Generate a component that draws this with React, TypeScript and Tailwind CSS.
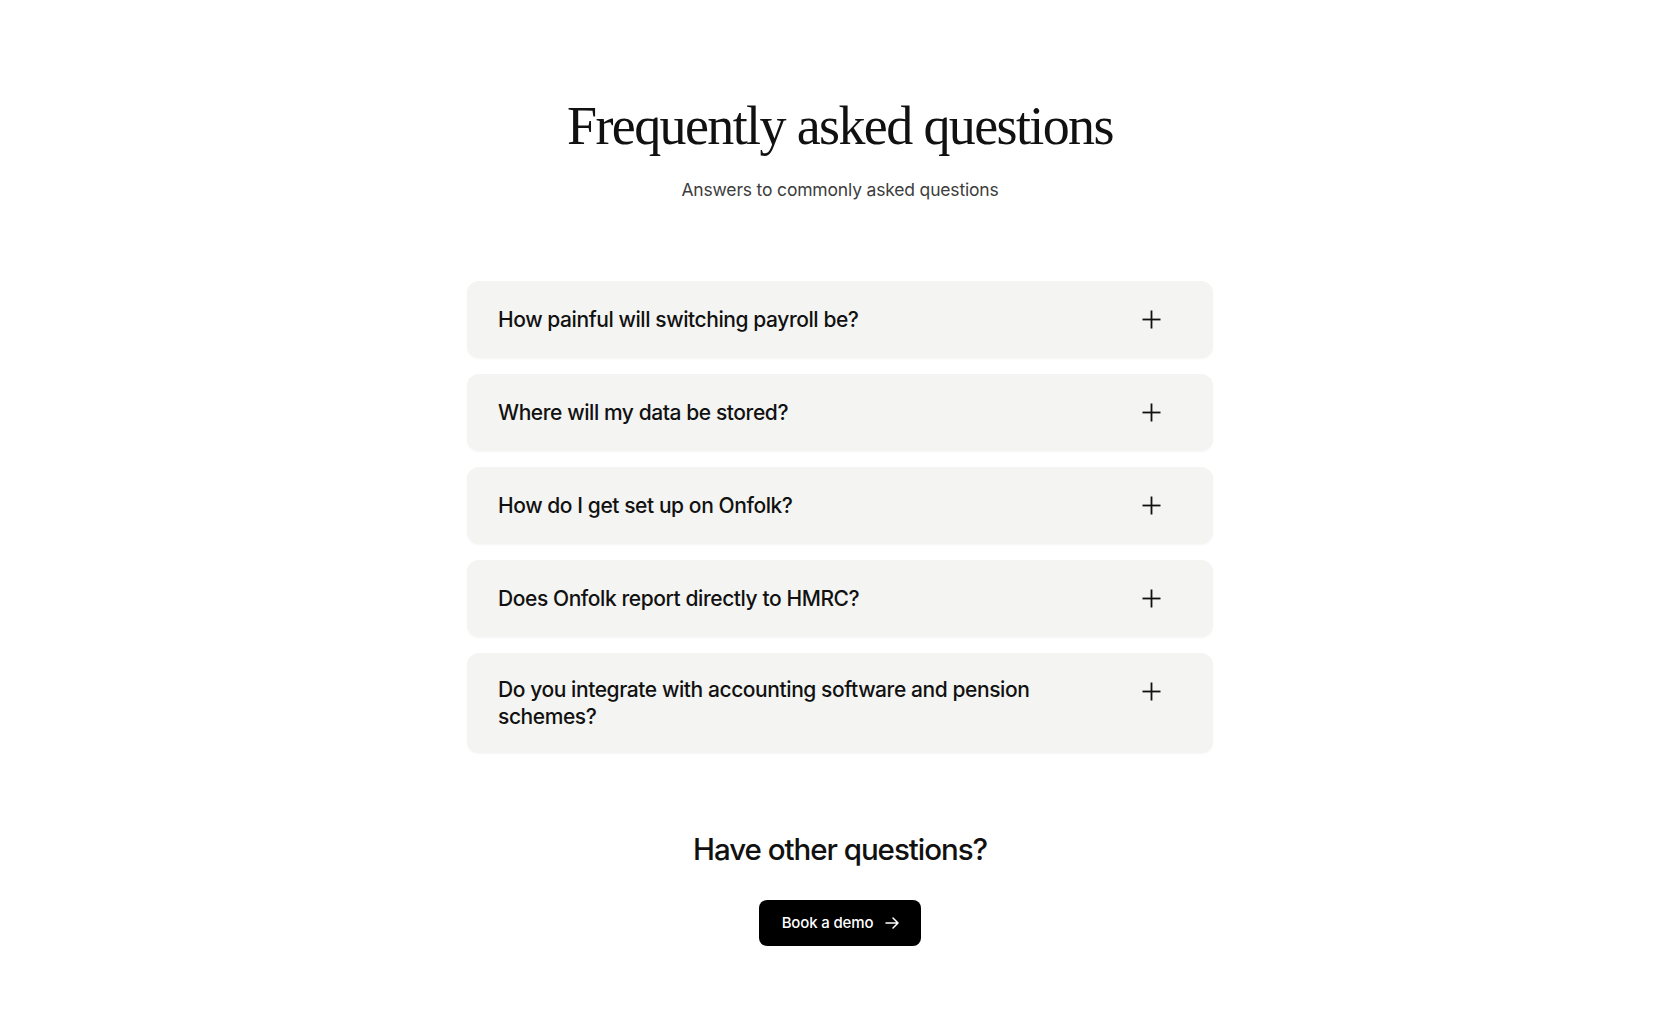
import React, { useState } from "react";

const faqs = [
  { q: "How painful will switching payroll be?", a: "Not very. We import your employees, pay history and year-to-date figures, so you can run your first payroll in an afternoon." },
  { q: "Where will my data be stored?", a: "All data is encrypted and stored in UK-based data centres." },
  { q: "How do I get set up on Onfolk?", a: "Book a demo and our team will walk you through onboarding step by step." },
  { q: "Does Onfolk report directly to HMRC?", a: "Yes. RTI submissions are sent to HMRC automatically every time you run payroll." },
  { q: "Do you integrate with accounting software and pension schemes?", a: "We connect with the major accounting tools and workplace pension providers." },
];

function PlusIcon({ open }: { open: boolean }) {
  return (
    <svg width="19" height="19" viewBox="0 0 19 19" fill="none" className="shrink-0">
      <path d="M0.5 9.5h18" stroke="#111" strokeWidth="1.8" />
      {!open && <path d="M9.5 0.5v18" stroke="#111" strokeWidth="1.8" />}
    </svg>
  );
}

export default function App() {
  const [open, setOpen] = useState<number | null>(null);

  return (
    <div className="min-h-screen bg-white font-['Inter',sans-serif] text-[#111]">
      <div className="mx-auto flex w-[746px] flex-col items-center pt-[99px] pb-20">
        <h1 className="font-['Liberation_Serif',serif] text-[54px] leading-none tracking-[-0.03em] text-[#111]">
          Frequently asked questions
        </h1>
        <p className="mt-[25px] text-[17.5px] leading-6 tracking-[-0.01em] text-[#3d3d3d]">
          Answers to commonly asked questions
        </p>

        <div className="mt-[79px] flex w-full flex-col gap-4">
          {faqs.map((f, i) => (
            <div
              key={i}
              className="rounded-[12px] bg-[#f4f4f2] shadow-[0_1px_2px_rgba(0,0,0,0.04)]"
            >
              <button
                onClick={() => setOpen(open === i ? null : i)}
                className="flex w-full items-start justify-between gap-10 py-[23px] pl-[31px] pr-[52px] text-left"
              >
                <span className="flex min-h-[31px] max-w-[560px] items-center text-[21px] font-medium leading-[27px] tracking-[-0.02em]">
                  {f.q}
                </span>
                <span className="flex h-[31px] items-center">
                  <PlusIcon open={open === i} />
                </span>
              </button>
              {open === i && (
                <p className="px-[31px] pb-6 text-[16px] leading-6 text-[#444]">{f.a}</p>
              )}
            </div>
          ))}
        </div>

        <h2 className="mt-[76px] text-[29.5px] font-medium leading-10 tracking-[-0.035em]">
          Have other questions?
        </h2>
        <button className="mt-[31px] flex h-[46px] items-center gap-3 rounded-[8px] bg-black pl-[23px] pr-[22px] text-[15px] font-medium tracking-[-0.01em] text-white">
          Book a demo
          <svg width="14" height="14" viewBox="0 0 14 14" fill="none">
            <path d="M1 7h12M8 2l5 5-5 5" stroke="#fff" strokeWidth="1.5" strokeLinecap="round" strokeLinejoin="round" />
          </svg>
        </button>
      </div>
    </div>
  );
}
